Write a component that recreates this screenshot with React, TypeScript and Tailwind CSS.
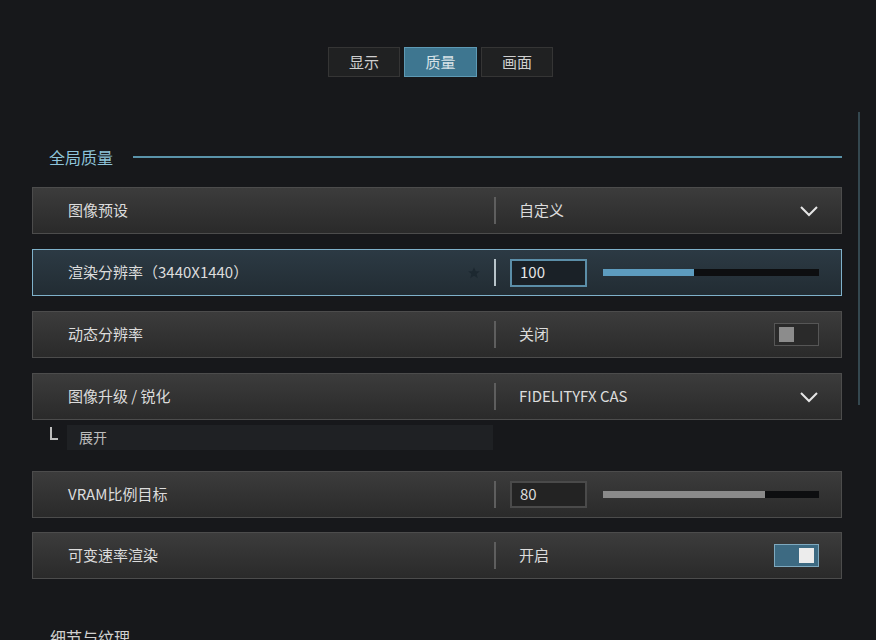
import React from 'react';

const font = { fontFamily: '"Noto Sans CJK SC", "Noto Sans", sans-serif' };

const Chevron = () => (
  <svg width="20" height="12" viewBox="0 0 20 12" className="mr-[22px]">
    <path d="M2 2 L10 10 L18 2" fill="none" stroke="#e6e6e6" strokeWidth="2" />
  </svg>
);

const Star = () => (
  <svg width="14" height="14" viewBox="0 0 24 24" className="mr-[13px]">
    <path d="M12 2l3 7h7l-5.5 4.5 2 7.5-6.5-4.5-6.5 4.5 2-7.5L2 9h7z" fill="#1c2830" />
  </svg>
);

const Slider = ({ pct, active }: { pct: number; active?: boolean }) => (
  <div className="ml-4 h-[7px] w-[216px] bg-[#0d0e10]">
    <div
      className={active ? 'h-full bg-[#5d9cbf]' : 'h-full bg-[#8a8a8a]'}
      style={{ width: `${pct}%` }}
    />
  </div>
);

const Toggle = ({ on }: { on?: boolean }) => (
  <div
    className={
      on
        ? 'mr-[22px] flex h-[23px] w-[45px] items-center justify-end border border-[#7ea9bf] bg-[#3d6a82] px-[4px]'
        : 'mr-[22px] flex h-[23px] w-[45px] items-center justify-start border border-[#565656] bg-[#2a2a2a] px-[4px]'
    }
  >
    <div className={on ? 'h-[15px] w-[15px] bg-[#ececec]' : 'h-[15px] w-[15px] bg-[#8c8c8c]'} />
  </div>
);

const Row = ({
  label,
  active,
  star,
  children,
}: {
  label: string;
  active?: boolean;
  star?: boolean;
  children: React.ReactNode;
}) => (
  <div
    className={
      active
        ? 'flex h-[47px] items-center border border-[#7fb1ca] bg-gradient-to-b from-[#2c3a44] to-[#222c33]'
        : 'flex h-[47px] items-center border border-[#4c4c4c] bg-gradient-to-b from-[#3c3c3c] to-[#2a2a2a]'
    }
  >
    <div className="flex w-[461px] items-center justify-between pl-[35px]">
      <span className="text-[15px] text-[#dcdcdc]">{label}</span>
      {star && <Star />}
    </div>
    <div className={active ? 'h-[27px] w-[2px] bg-[#b8c4ca]' : 'h-[27px] w-[2px] bg-[#5e5e5e]'} />
    {children}
  </div>
);

const Value = ({ text }: { text: string }) => (
  <span className="ml-[23px] flex-1 text-[15px] text-[#dcdcdc]">{text}</span>
);

const InputBox = ({ v, active }: { v: string; active?: boolean }) => (
  <div
    className={
      active
        ? 'ml-[14px] flex h-[28px] w-[77px] items-center border-2 border-[#5b8ea8] bg-[#1a2127] pl-2 text-[15px] text-[#e6e6e6]'
        : 'ml-[14px] flex h-[27px] w-[77px] items-center border-2 border-[#4a4a4a] bg-[#232323] pl-2 text-[15px] text-[#dcdcdc]'
    }
  >
    {v}
  </div>
);

export default function App() {
  return (
    <div className="relative h-[640px] w-[876px] overflow-hidden bg-[#17181b]" style={font}>
      {/* Tabs */}
      <div className="flex gap-1 pl-[328px] pt-[47px]">
        <div className="flex h-[30px] w-[72px] items-center justify-center border border-[#353535] bg-[#202122] text-[15px] text-[#cfcfcf]">
          显示
        </div>
        <div className="flex h-[30px] w-[73px] items-center justify-center border border-[#5e9ab5] bg-[#3e7690] text-[15px] text-[#d8e2e7]">
          质量
        </div>
        <div className="flex h-[30px] w-[72px] items-center justify-center border border-[#353535] bg-[#202122] text-[15px] text-[#cfcfcf]">
          画面
        </div>
      </div>

      {/* Section header */}
      <div className="mt-[69px] flex h-[22px] items-center pl-[49px] pr-[34px]">
        <span className="text-[16px] text-[#8ec4da]">全局质量</span>
        <div className="ml-[20px] h-[2px] flex-1 bg-[#5a93aa]" />
      </div>

      {/* Rows */}
      <div className="mt-[19px] flex w-[810px] flex-col pl-[32px] box-content">
        <Row label="图像预设">
          <Value text="自定义" />
          <Chevron />
        </Row>
        <div className="h-[15px]" />
        <Row label="渲染分辨率（3440X1440）" active star>
          <InputBox v="100" active />
          <Slider pct={42} active />
        </Row>
        <div className="h-[15px]" />
        <Row label="动态分辨率">
          <Value text="关闭" />
          <Toggle />
        </Row>
        <div className="h-[15px]" />
        <Row label="图像升级 / 锐化">
          <Value text="FIDELITYFX CAS" />
          <Chevron />
        </Row>
        <div className="mt-[5px] flex h-[25px] items-center">
          <div className="ml-[18px] mb-[8px] h-[13px] w-[8px] border-b-2 border-l-2 border-[#bdbdbd]" />
          <div className="ml-[9px] flex h-[25px] w-[426px] items-center bg-[#1f2124] pl-[12px] text-[14px] text-[#bdbdbd]">
            展开
          </div>
        </div>
        <div className="h-[21px]" />
        <Row label="VRAM比例目标">
          <InputBox v="80" />
          <Slider pct={75} />
        </Row>
        <div className="h-[14px]" />
        <Row label="可变速率渲染">
          <Value text="开启" />
          <Toggle on />
        </Row>
      </div>

      <div className="mt-[46px] pl-[50px] text-[16px] text-[#d0d0d0]">细节与纹理</div>

      {/* Scrollbar */}
      <div className="absolute left-[858px] top-[112px] h-[293px] w-[2px] bg-[#34474f]" />
    </div>
  );
}
